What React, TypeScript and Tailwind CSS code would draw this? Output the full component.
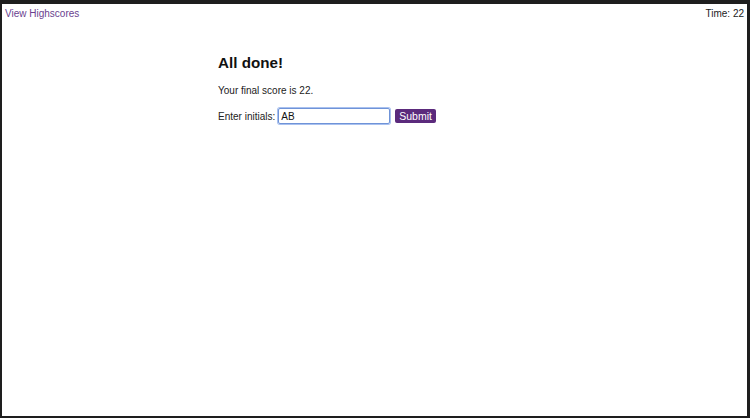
import React from "react";

export default function App() {
  return (
    <div className="w-[750px] h-[418px] bg-[#1e1e1e] pt-[4px] pl-[2px] pr-[3px] pb-[2px] flex" style={{ fontFamily: '"Liberation Sans", Arial, sans-serif' }}>
      <div className="flex-1 bg-white flex flex-col">
        <div className="flex justify-between items-start px-[3px] pt-[4px] text-[10px] leading-[12px]">
          <span className="text-[#6a3f8f]">View Highscores</span>
          <span className="text-[#222]">Time: 22</span>
        </div>
        <div className="pl-[216px] pt-[34px] text-[#222]">
          <h1 className="text-[15.2px] leading-[18px] font-bold text-[#111]">All done!</h1>
          <p className="text-[10px] leading-[12px] mt-[13px]">Your final score is 22.</p>
          <div className="flex items-center mt-[11px] text-[10px]">
            <span>Enter initials:</span>
            <input
              defaultValue="AB"
              className="ml-[3px] w-[112px] h-[16px] border border-[#6f93d8] rounded-[2px] px-[2px] text-[10px] text-[#111] outline-none shadow-[0_0_0_1px_#a9c1ef]"
            />
            <button className="ml-[5px] h-[14px] px-[4px] rounded-[2px] bg-[#5b2a7c] text-white text-[10.5px] leading-[14px]">Submit</button>
          </div>
        </div>
      </div>
    </div>
  );
}
